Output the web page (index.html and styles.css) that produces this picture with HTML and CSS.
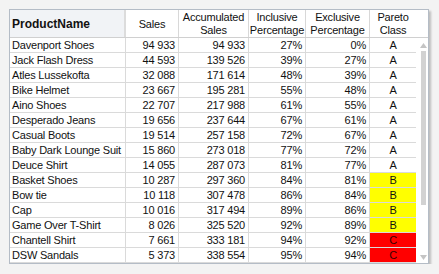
FILE: index.html
```html
<!DOCTYPE html>
<html>
<head>
<meta charset="utf-8">
<link rel="stylesheet" href="styles.css">
</head>
<body>
<div class="widget">
  <div class="head">
    <div class="hc first">ProductName</div>
    <div class="hc">Sales</div>
    <div class="hc">Accumulated<br>Sales</div>
    <div class="hc">Inclusive<br>Percentage</div>
    <div class="hc">Exclusive<br>Percentage</div>
    <div class="hc last">Pareto<br>Class</div>
    <div class="hc corner"></div>
  </div>
  <div class="main">
    <div class="rows">
      <div class="row"><div class="c name">Davenport Shoes</div><div class="c">94 933</div><div class="c">94 933</div><div class="c">27%</div><div class="c">0%</div><div class="c cls">A</div></div>
      <div class="row"><div class="c name">Jack Flash Dress</div><div class="c">44 593</div><div class="c">139 526</div><div class="c">39%</div><div class="c">27%</div><div class="c cls">A</div></div>
      <div class="row"><div class="c name">Atles Lussekofta</div><div class="c">32 088</div><div class="c">171 614</div><div class="c">48%</div><div class="c">39%</div><div class="c cls">A</div></div>
      <div class="row"><div class="c name">Bike Helmet</div><div class="c">23 667</div><div class="c">195 281</div><div class="c">55%</div><div class="c">48%</div><div class="c cls">A</div></div>
      <div class="row"><div class="c name">Aino Shoes</div><div class="c">22 707</div><div class="c">217 988</div><div class="c">61%</div><div class="c">55%</div><div class="c cls">A</div></div>
      <div class="row"><div class="c name">Desperado Jeans</div><div class="c">19 656</div><div class="c">237 644</div><div class="c">67%</div><div class="c">61%</div><div class="c cls">A</div></div>
      <div class="row"><div class="c name">Casual Boots</div><div class="c">19 514</div><div class="c">257 158</div><div class="c">72%</div><div class="c">67%</div><div class="c cls">A</div></div>
      <div class="row"><div class="c name">Baby Dark Lounge Suit</div><div class="c">15 860</div><div class="c">273 018</div><div class="c">77%</div><div class="c">72%</div><div class="c cls">A</div></div>
      <div class="row"><div class="c name">Deuce Shirt</div><div class="c">14 055</div><div class="c">287 073</div><div class="c">81%</div><div class="c">77%</div><div class="c cls">A</div></div>
      <div class="row"><div class="c name">Basket Shoes</div><div class="c">10 287</div><div class="c">297 360</div><div class="c">84%</div><div class="c">81%</div><div class="c cls b">B</div></div>
      <div class="row"><div class="c name">Bow tie</div><div class="c">10 118</div><div class="c">307 478</div><div class="c">86%</div><div class="c">84%</div><div class="c cls b">B</div></div>
      <div class="row"><div class="c name">Cap</div><div class="c">10 016</div><div class="c">317 494</div><div class="c">89%</div><div class="c">86%</div><div class="c cls b">B</div></div>
      <div class="row"><div class="c name">Game Over T-Shirt</div><div class="c">8 026</div><div class="c">325 520</div><div class="c">92%</div><div class="c">89%</div><div class="c cls b">B</div></div>
      <div class="row"><div class="c name">Chantell Shirt</div><div class="c">7 661</div><div class="c">333 181</div><div class="c">94%</div><div class="c">92%</div><div class="c cls r">C</div></div>
      <div class="row"><div class="c name">DSW Sandals</div><div class="c">5 373</div><div class="c">338 554</div><div class="c">95%</div><div class="c">94%</div><div class="c cls r">C</div></div>
    </div>
    <div class="scroll">
      <svg class="arrow" width="7" height="5" viewBox="0 0 7 5"><polygon points="3.5,0 7,5 0,5" fill="#c4c4c4"/></svg>
      <div class="thumb"></div>
      <div class="track"></div>
      <svg class="arrow" width="7" height="5" viewBox="0 0 7 5"><polygon points="0,0 7,0 3.5,5" fill="#c4c4c4"/></svg>
    </div>
  </div>
</div>
</body>
</html>
```
FILE: styles.css
```css
html, body {
  margin: 0;
  padding: 0;
  background: #f3f3f3;
}
body {
  padding: 9px 0 0 9px;
  font-family: "Liberation Sans", Arial, sans-serif;
  font-size: 11px;
  letter-spacing: -0.2px;
  color: #111;
}
.widget {
  width: 420px;
  height: 255px;
  box-sizing: border-box;
  border: 1px solid #b4bcc6;
  background: #fff;
  box-shadow: 2px 2px 2px rgba(0, 0, 0, 0.22);
  display: flex;
  flex-direction: column;
}
.head {
  display: grid;
  grid-template-columns: 116px 53px 70px 57px 64px 46px 12px;
  height: 28px;
  box-sizing: border-box;
  border-bottom: 1px solid #d0d0d0;
}
.hc {
  box-sizing: border-box;
  border-right: 1px solid #d8d8d8;
  display: flex;
  align-items: center;
  justify-content: center;
  text-align: center;
  line-height: 13px;
  padding-top: 1px;
}
.hc.first {
  justify-content: flex-start;
  padding-left: 2px;
  background: #f1f3f6;
  border-right: 2px solid #dcdcdc;
  font-weight: bold;
  font-size: 12px;
  letter-spacing: 0;
}
.hc.last, .hc.corner {
  border-right: none;
}
.main {
  display: flex;
  flex: 1;
}
.rows {
  display: flex;
  flex-direction: column;
  width: 406px;
}
.row {
  display: grid;
  grid-template-columns: 116px 53px 70px 57px 64px 46px;
  height: 15px;
  box-sizing: border-box;
  border-bottom: 1px solid #dadada;
}
.c {
  box-sizing: border-box;
  border-right: 1px solid #dadada;
  text-align: right;
  padding: 0 3px 0 2px;
  line-height: 14px;
  white-space: nowrap;
  overflow: hidden;
}
.c.name {
  text-align: left;
  padding-left: 2px;
}
.c.cls {
  text-align: center;
  border-right: none;
  padding: 0;
}
.c.b {
  background: #ffff00;
}
.c.r {
  background: #ff0000;
  color: #3a0000;
}
.scroll {
  width: 12px;
  display: flex;
  flex-direction: column;
  align-items: center;
  padding: 5px 0 3px 2px;
  box-sizing: border-box;
}
.arrow {
  display: block;
  flex: none;
}
.thumb {
  width: 5px;
  height: 154px;
  margin-top: 3px;
  background: #d2d2d2;
  flex: none;
}
.track {
  flex: 1;
}
```
